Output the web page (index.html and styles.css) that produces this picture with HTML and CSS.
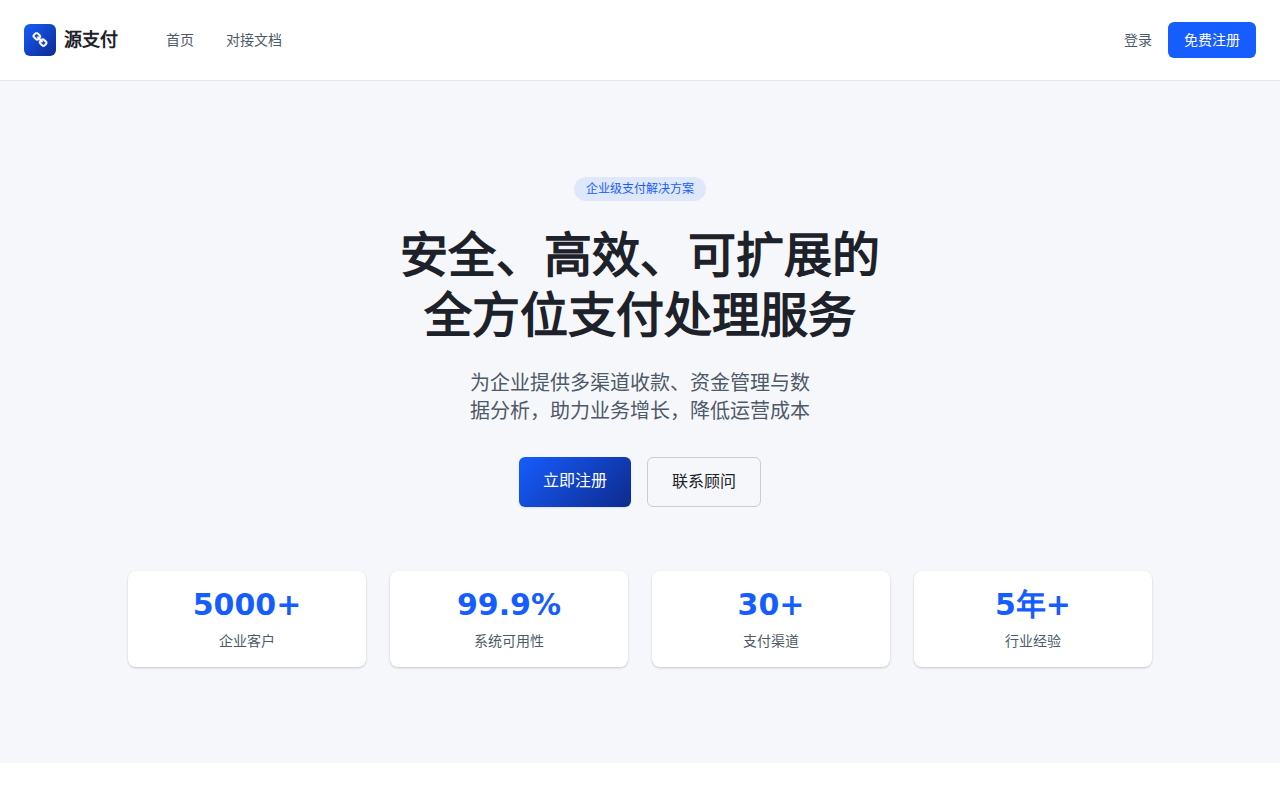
FILE: index.html
```html
<!DOCTYPE html>
<html lang="zh-CN">
<head>
  <meta charset="UTF-8">
  <meta name="viewport" content="width=device-width, initial-scale=1.0">
  <title>源支付</title>
  <link rel="stylesheet" href="styles.css">
</head>
<body>
  <header class="header">
    <div class="header-left">
      <a href="#" class="logo">
        <span class="logo-icon">
          <svg width="16" height="16" viewBox="0 0 1792 1792" fill="currentColor" stroke="currentColor" stroke-width="50" aria-hidden="true"><path d="M1520 1216q0-40-28-68l-208-208q-28-28-68-28-42 0-72 32 3 3 19 18.500t21.500 21.500 15 19 13 25.500 3.500 27.500q0 40-28 68t-68 28q-15 0-27.500-3.500t-25.500-13-19-15-21.500-21.500-18.500-19q-33 31-33 73 0 40 28 68l206 207q27 27 68 27 40 0 68-26l147-146q28-28 28-67zm-703-705q0-40-28-68l-206-207q-28-28-68-28-39 0-68 27l-147 146q-28 28-28 67 0 40 28 68l208 208q27 27 68 27 42 0 72-31-3-3-19-18.500t-21.500-21.500-15-19-13-25.500-3.500-27.500q0-40 28-68t68-28q15 0 27.500 3.500t25.500 13 19 15 21.500 21.500 18.500 19q33-31 33-73zm895 705q0 120-85 203l-147 146q-83 83-203 83-121 0-204-85l-206-207q-83-83-83-203 0-123 88-209l-88-88q-86 88-208 88-120 0-204-84l-208-208q-84-84-84-204t85-203l147-146q83-83 203-83 121 0 204 85l206 207q83 83 83 203 0 123-88 209l88 88q86-88 208-88 120 0 204 84l208 208q84 84 84 204z"/></svg>
        </span>
        <span class="logo-text">源支付</span>
      </a>
      <nav class="nav">
        <a href="#">首页</a>
        <a href="#">对接文档</a>
      </nav>
    </div>
    <div class="header-right">
      <a href="#" class="login">登录</a>
      <a href="#" class="register">免费注册</a>
    </div>
  </header>

  <main>
    <section class="hero">
      <div class="container">
        <span class="badge">企业级支付解决方案</span>
        <h1>安全、高效、可扩展的<br>全方位支付处理服务</h1>
        <p class="intro">为企业提供多渠道收款、资金管理与数据分析，助力业务增长，降低运营成本</p>
        <div class="actions">
          <a href="#" class="btn btn-primary">立即注册</a>
          <a href="#" class="btn btn-outline">联系顾问</a>
        </div>
        <div class="stats">
          <div class="stat">
            <div class="stat-value">5000+</div>
            <div class="stat-label">企业客户</div>
          </div>
          <div class="stat">
            <div class="stat-value">99.9%</div>
            <div class="stat-label">系统可用性</div>
          </div>
          <div class="stat">
            <div class="stat-value">30+</div>
            <div class="stat-label">支付渠道</div>
          </div>
          <div class="stat">
            <div class="stat-value">5年+</div>
            <div class="stat-label">行业经验</div>
          </div>
        </div>
      </div>
    </section>
  </main>
</body>
</html>
```
FILE: styles.css
```css
* {
  box-sizing: border-box;
}
body {
  margin: 0;
  font-family: "DejaVu Sans", "Noto Sans CJK SC", sans-serif;
  font-size: 16px;
  line-height: 24px;
  color: #1d2129;
  background: #fff;
}
a {
  color: inherit;
  text-decoration: none;
}
h1,
.logo-text,
.stat-value {
  font-family: "DejaVu Sans", sans-serif;
  font-weight: 700;
}

/* header */
.header {
  display: flex;
  align-items: center;
  justify-content: space-between;
  min-height: 81px;
  padding: 0 24px;
  border-bottom: 1px solid #e5e6eb;
}
.header-left {
  display: flex;
  align-items: center;
  gap: 48px;
}
.logo {
  display: flex;
  align-items: center;
  gap: 8px;
}
.logo-icon {
  display: flex;
  align-items: center;
  justify-content: center;
  width: 32px;
  height: 32px;
  border-radius: 6px;
  color: #fff;
  background: linear-gradient(135deg, #165dff 0%, #0e2a8c 100%);
}
.logo-text {
  font-size: 18px;
  line-height: 28px;
}
.nav,
.header-right {
  display: flex;
  align-items: center;
  gap: 32px;
  font-size: 14px;
  line-height: 20px;
  color: #4e5969;
}
.header-right {
  gap: 16px;
}
.register {
  padding: 8px 16px;
  border-radius: 6px;
  color: #fff;
  background: #165dff;
}

/* hero */
.hero {
  padding: 96px 24px;
  background: #f5f7fb;
}
.container {
  display: flex;
  flex-direction: column;
  align-items: center;
  max-width: 1024px;
  margin: 0 auto;
  text-align: center;
}
.badge {
  padding: 4px 12px;
  border-radius: 12px;
  font-size: 12px;
  line-height: 16px;
  color: #165dff;
  background: #dfe8fb;
}
h1 {
  margin: 24px 0;
  font-size: 48px;
  line-height: 60px;
}
.intro {
  max-width: 672px;
  margin: 0 0 32px;
  font-size: 20px;
  line-height: 28px;
  color: #4e5969;
  text-wrap: balance;
}
.actions {
  display: flex;
  gap: 16px;
  margin-bottom: 64px;
}
.btn {
  padding: 12px 24px;
  border-radius: 6px;
}
.btn-primary {
  color: #fff;
  background: linear-gradient(135deg, #165dff 0%, #0e2a8c 100%);
  box-shadow: 0 1px 2px rgba(0, 0, 0, 0.1);
}
.btn-outline {
  border: 1px solid #c9cdd4;
}

/* stats */
.stats {
  display: grid;
  grid-template-columns: repeat(4, 1fr);
  gap: 24px;
  width: 100%;
}
.stat {
  padding: 16px;
  border-radius: 8px;
  background: #fff;
  box-shadow: 0 1px 3px rgba(0, 0, 0, 0.1), 0 1px 2px rgba(0, 0, 0, 0.1);
}
.stat-value {
  margin-bottom: 8px;
  font-size: 30px;
  line-height: 36px;
  color: #165dff;
}
.stat-label {
  font-size: 14px;
  line-height: 20px;
  color: #4e5969;
}
```
